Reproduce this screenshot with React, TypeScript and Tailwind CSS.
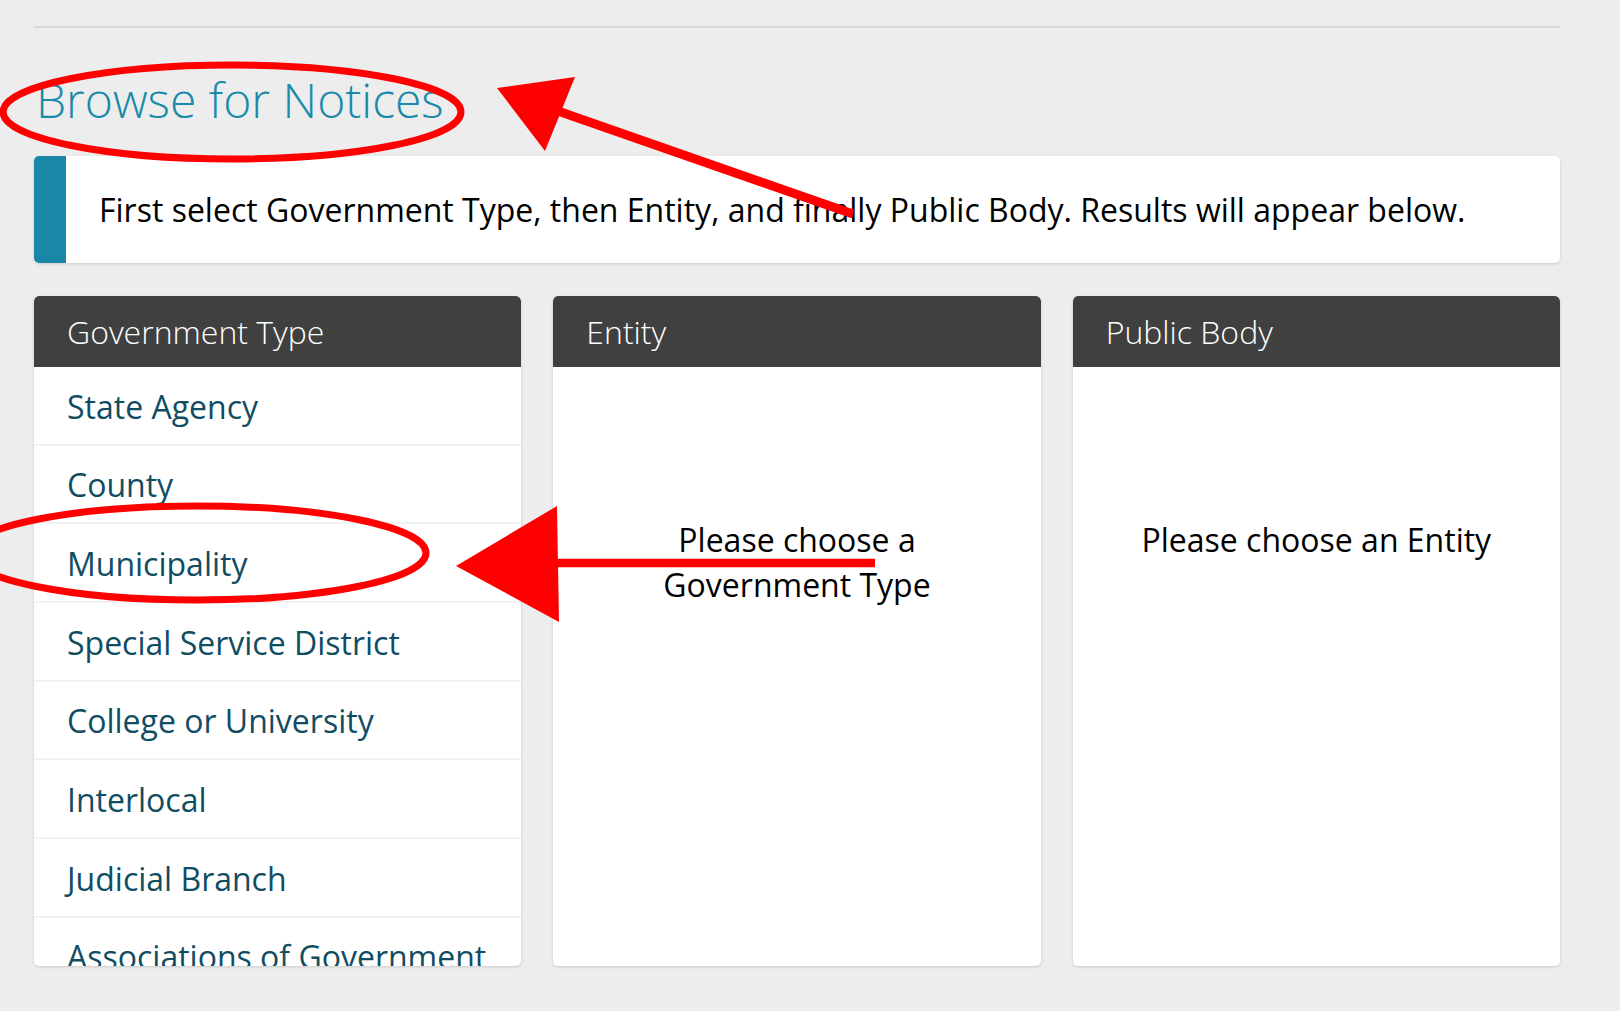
import React from "react";

const types = [
  "State Agency",
  "County",
  "Municipality",
  "Special Service District",
  "College or University",
  "Interlocal",
  "Judicial Branch",
  "Associations of Government",
];

function PanelHeader({ title }: { title: string }) {
  return (
    <div className="h-[71px] shrink-0 bg-[#404040] rounded-t-[5px] flex items-center pl-[33px] text-[32px] font-light text-white leading-none">
      {title}
    </div>
  );
}

export default function App() {
  return (
    <div className="relative w-full min-h-[1011px] h-[1011px] overflow-hidden bg-[#ededed] font-['Open_Sans',sans-serif]">
      <div className="ml-[34px] w-[1526px] pt-[26px]">
        <div className="h-[2px] bg-[#d9d9d9]" />
        <h1 className="mt-[44px] pl-[2px] text-[48px] leading-[56px] font-light text-[#1b8aaa]">
          Browse for Notices
        </h1>
        <div className="mt-[28px] h-[107px] flex bg-white rounded-[5px] overflow-hidden shadow-[0_1px_3px_rgba(0,0,0,0.15)]">
          <div className="w-[32px] shrink-0 bg-[#1b87a7]" />
          <div className="flex items-center pl-[33px] text-[32px] text-black whitespace-nowrap">
            First select Government Type, then Entity, and finally Public Body. Results will appear below.
          </div>
        </div>
        <div className="mt-[33px] grid grid-cols-3 gap-[32px]">
          <div className="h-[670px] flex flex-col bg-white rounded-[5px] overflow-hidden shadow-[0_1px_3px_rgba(0,0,0,0.15)]">
            <PanelHeader title="Government Type" />
            <div className="flex-1 overflow-hidden">
              {types.map((t) => (
                <div
                  key={t}
                  className="h-[78.66px] border-b-2 border-[#f2f2f2] flex items-center pt-[3px] pl-[33px] text-[32px] text-[#104d63] whitespace-nowrap"
                >
                  {t}
                </div>
              ))}
            </div>
          </div>
          <div className="h-[670px] flex flex-col bg-white rounded-[5px] overflow-hidden shadow-[0_1px_3px_rgba(0,0,0,0.15)]">
            <PanelHeader title="Entity" />
            <div className="flex-1 pt-[150px] px-[50px] text-center text-[32px] leading-[45px] text-black">
              Please choose a Government Type
            </div>
          </div>
          <div className="h-[670px] flex flex-col bg-white rounded-[5px] overflow-hidden shadow-[0_1px_3px_rgba(0,0,0,0.15)]">
            <PanelHeader title="Public Body" />
            <div className="flex-1 pt-[150px] px-[33px] text-center text-[32px] leading-[45px] text-black">
              Please choose an Entity
            </div>
          </div>
        </div>
      </div>

      <svg
        className="absolute inset-0 pointer-events-none"
        width="1620"
        height="1011"
        viewBox="0 0 1620 1011"
      >
        <ellipse cx="232" cy="112" rx="229" ry="47" fill="none" stroke="#ff0000" strokeWidth="7" />
        <line x1="853" y1="214" x2="555" y2="110" stroke="#ff0000" strokeWidth="9" />
        <polygon points="497,88 575,77 545,151" fill="#ff0000" />
        <ellipse cx="197" cy="553" rx="229" ry="47" fill="none" stroke="#ff0000" strokeWidth="7" />
        <line x1="875" y1="563" x2="552" y2="563" stroke="#ff0000" strokeWidth="8.5" />
        <polygon points="456,566 557,506 559,622" fill="#ff0000" />
      </svg>
    </div>
  );
}
